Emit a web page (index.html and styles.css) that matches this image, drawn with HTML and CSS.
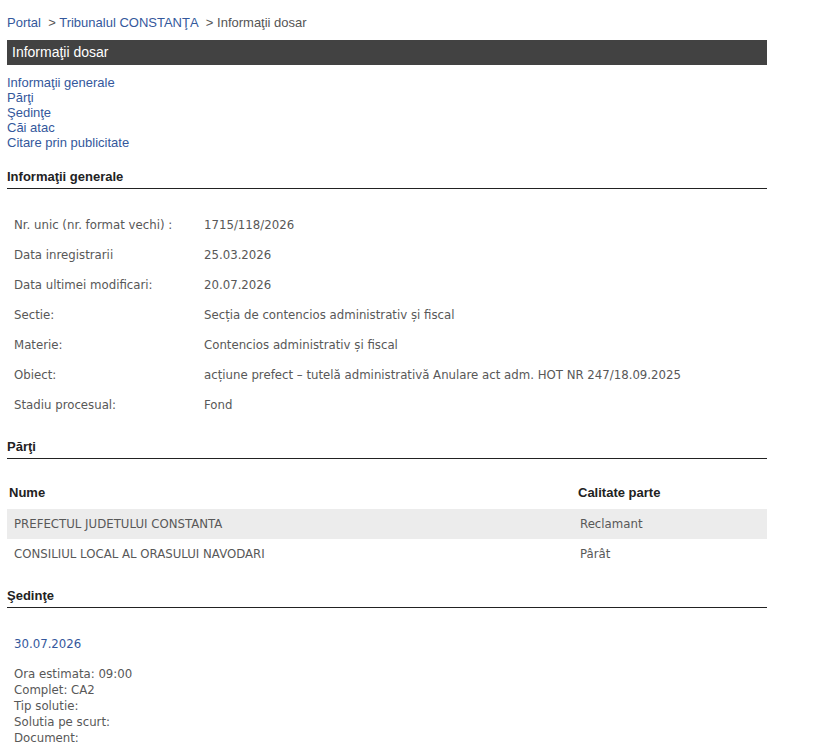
FILE: index.html
```html
<!doctype html>
<html lang="ro">
<head>
    <meta charset="UTF-8">
    <title>Informaţii dosar</title>
    <link rel="stylesheet" href="styles.css">
</head>
<body>
    <div class="page">
        <div class="breadcrumb"><a href="#">Portal</a>&nbsp; <span class="sep">&gt;</span> <a href="#">Tribunalul CONSTANŢA</a>&nbsp; <span class="sep">&gt; Informaţii dosar</span></div>

        <div class="title-bar">Informaţii dosar</div>

        <div class="nav-links">
            <a href="#info">Informaţii generale</a>
            <a href="#parti">Părţi</a>
            <a href="#sedinte">Şedinţe</a>
            <a href="#cai">Căi atac</a>
            <a href="#citare">Citare prin publicitate</a>
        </div>

        <h3 class="section-title" id="info">Informaţii generale</h3>
        <table class="info-table">
            <tr><td class="label">Nr. unic (nr. format vechi) :</td><td>1715/118/2026</td></tr>
            <tr><td class="label">Data inregistrarii</td><td>25.03.2026</td></tr>
            <tr><td class="label">Data ultimei modificari:</td><td>20.07.2026</td></tr>
            <tr><td class="label">Sectie:</td><td>Secția de contencios administrativ și fiscal</td></tr>
            <tr><td class="label">Materie:</td><td>Contencios administrativ și fiscal</td></tr>
            <tr><td class="label">Obiect:</td><td>acțiune prefect – tutelă administrativă Anulare act adm. HOT NR 247/18.09.2025</td></tr>
            <tr><td class="label">Stadiu procesual:</td><td>Fond</td></tr>
        </table>

        <h3 class="section-title" id="parti">Părţi</h3>
        <table class="parti-table">
            <thead>
                <tr><th>Nume</th><th class="col-calitate">Calitate parte</th></tr>
            </thead>
            <tbody>
                <tr class="odd"><td>PREFECTUL JUDETULUI CONSTANTA</td><td class="col-calitate">Reclamant</td></tr>
                <tr><td>CONSILIUL LOCAL AL ORASULUI NAVODARI</td><td class="col-calitate">Pârât</td></tr>
            </tbody>
        </table>

        <h3 class="section-title" id="sedinte">Şedinţe</h3>
        <div class="sedinta">
            <div class="sedinta-data">30.07.2026</div>
            <div class="sedinta-detalii">
                Ora estimata: 09:00<br>
                Complet: CA2<br>
                Tip solutie:<br>
                Solutia pe scurt:<br>
                Document:
            </div>
        </div>
    </div>
</body>
</html>
```

FILE: styles.css
```css
:root {
    --link-color: #34589c;
    --text-color: #585858;
    --dark: #424242;
    --row-bg: #ececec;
}

body {
    margin: 0;
    padding: 0;
    background: #fff;
    font-family: "Liberation Sans", Arial, sans-serif;
    font-size: 13px;
    color: #222;
}

a {
    color: var(--link-color);
    text-decoration: none;
}

.page {
    width: 760px;
    padding: 0 7px;
}

.breadcrumb {
    padding-top: 15px;
    line-height: 15px;
}

.breadcrumb .sep {
    color: #555;
}

.title-bar {
    margin-top: 10px;
    height: 25px;
    line-height: 25px;
    padding-left: 5px;
    background: var(--dark);
    color: #fff;
    font-size: 14px;
}

.nav-links {
    margin-top: 10px;
    line-height: 15px;
}

.nav-links a {
    display: block;
}

.section-title {
    margin: 19px 0 0;
    padding-bottom: 4px;
    line-height: 15px;
    font-size: 13px;
    font-weight: bold;
    color: #222;
    border-bottom: 1px solid #222;
}

.info-table,
.parti-table {
    width: 100%;
    border-collapse: collapse;
    font-family: "DejaVu Sans", Verdana, sans-serif;
    font-size: 11.75px;
    color: var(--text-color);
}

.info-table {
    margin-top: 21px;
}

.info-table td {
    height: 30px;
    padding: 0;
    vertical-align: middle;
}

.info-table td.label {
    width: 197px;
    padding-left: 7px;
    box-sizing: border-box;
}

.parti-table {
    margin-top: 16px;
}

.parti-table th {
    height: 34px;
    padding: 0 0 0 2px;
    text-align: left;
    font-family: "Liberation Sans", Arial, sans-serif;
    font-size: 13px;
    color: #222;
}

.parti-table td {
    height: 30px;
    padding: 0 0 0 7px;
}

.parti-table th.col-calitate {
    width: 189px;
}

.parti-table td.col-calitate {
    padding-left: 4px;
}

.parti-table tr.odd td {
    background: var(--row-bg);
}

.sedinta {
    padding: 28px 0 0 7px;
    font-family: "DejaVu Sans", Verdana, sans-serif;
    font-size: 11.75px;
    line-height: 16px;
    color: var(--text-color);
}

.sedinta-data {
    color: var(--link-color);
}

.sedinta-detalii {
    margin-top: 14px;
}
```
